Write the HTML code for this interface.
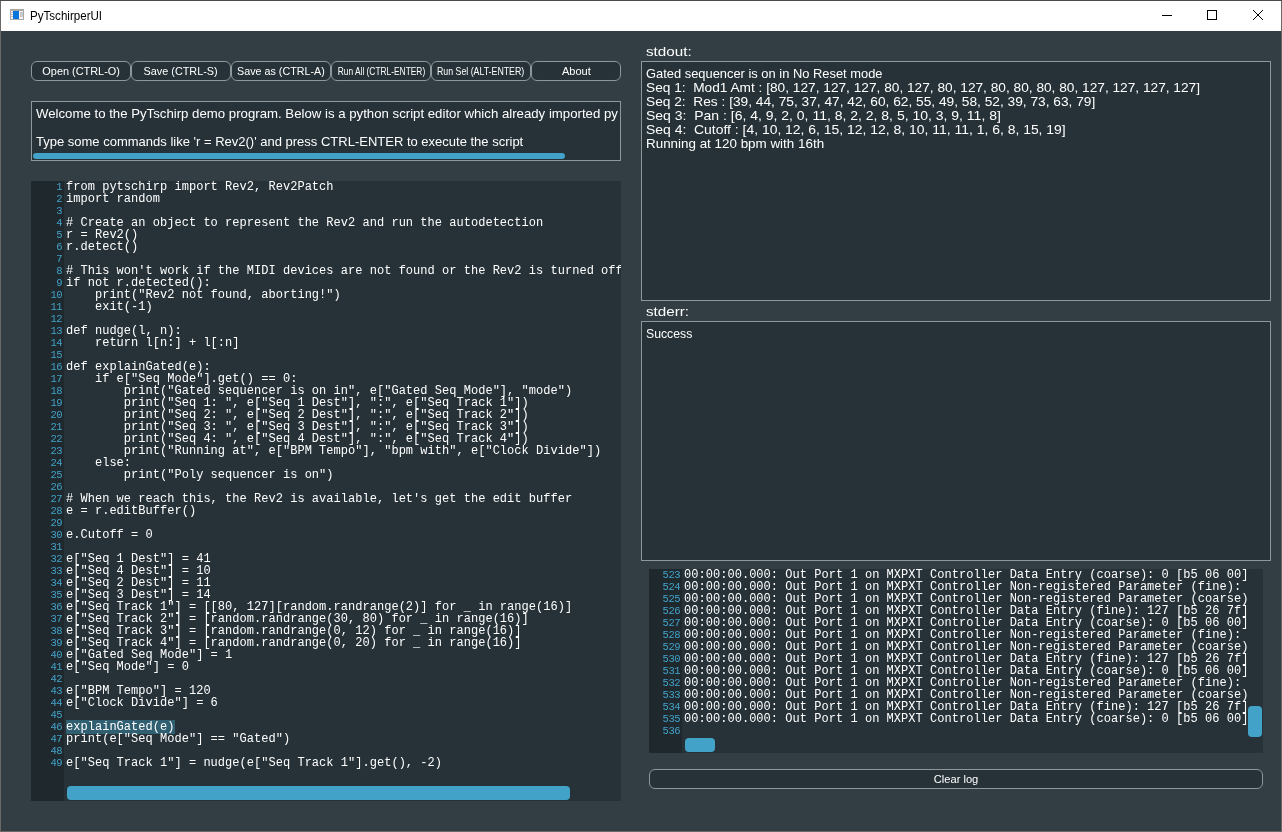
<!DOCTYPE html>
<html><head><meta charset="utf-8"><style>
*{box-sizing:border-box}
html,body{margin:0;padding:0;width:1282px;height:832px;overflow:hidden;background:#6a6764;font-family:"Liberation Sans",sans-serif}
.abs{position:absolute}
.btn,.box,.ed,.lbl,#title{will-change:transform}
#title{position:absolute;left:1px;top:1px;width:1280px;height:30px;background:#fff}
#title .t{position:absolute;left:29px;top:8px;font-size:12px;line-height:14px;color:#000;white-space:pre}
#main{position:absolute;left:1px;top:31px;width:1280px;height:800px;background:#323e44}
.btn{position:absolute;top:61px;height:20px;display:flex;justify-content:center;border:1px solid #8e989b;border-radius:6px;background:#263238;color:#ffffff;font-size:11px;line-height:18px;text-align:center;white-space:pre}
.box{position:absolute;border:1px solid #8e989b;background:#263238;overflow:hidden}
.sl{position:absolute;left:4px;font-size:13px;line-height:14px;color:#ffffff;white-space:pre}
.ed{position:absolute;background:#263238;overflow:hidden}
.gut{position:absolute;left:0;top:0;bottom:0;background:#1f282d}
.ln{position:absolute;right:2px;letter-spacing:-0.5px;height:12px;font-family:"Liberation Mono",monospace;font-size:10.5px;line-height:12px;color:#42a2c8;white-space:pre}
.cl{position:absolute;left:0;height:12px;font-family:"Liberation Mono",monospace;font-size:12px;line-height:12px;color:#ffffff;white-space:pre;letter-spacing:0.03px}
.lg .cl{letter-spacing:0.035px}
.bt{display:inline-block;transform-origin:50% 50%}
.ft{display:inline-block;transform-origin:0 50%}
.hl{background:#315f72;padding-right:1px}
.sb{position:absolute;background:#42a2c8;border-radius:4px}
.lbl{position:absolute;font-size:13px;line-height:14px;color:#ffffff;white-space:pre}
</style></head><body>
<div class="abs" style="left:0;top:0;width:1282px;height:1px;background:#4a4a4a"></div>
<div id="title">
 <svg class="abs" style="left:9px;top:8px" width="14" height="11" viewBox="0 0 14 11" shape-rendering="crispEdges">
  <rect x="0" y="0" width="14" height="11" fill="#a9a9a9"/>
  <rect x="1" y="2" width="12" height="8" fill="#f4f4f4"/>
  <rect x="1" y="3" width="2" height="1" fill="#c4c4c4"/><rect x="1" y="5" width="2" height="1" fill="#c4c4c4"/><rect x="1" y="7" width="2" height="1" fill="#c4c4c4"/>
  <rect x="3" y="2" width="6" height="8" fill="#0a74d8"/>
  <rect x="10" y="3" width="3" height="5" fill="#c9c9c9"/>
 </svg>
 <div class="t"><span style="display:inline-block;transform:scaleX(0.965);transform-origin:0 50%">PyTschirperUI</span></div>
 <svg class="abs" style="left:1159px;top:7px" width="14" height="14" shape-rendering="crispEdges"><rect x="2" y="7" width="10" height="1" fill="#000"/></svg>
 <svg class="abs" style="left:1204px;top:7px" width="14" height="14"><rect x="2.5" y="2.5" width="9" height="9" fill="none" stroke="#000" stroke-width="1"/></svg>
 <svg class="abs" style="left:1250px;top:7px" width="14" height="14"><path d="M2 2 L12 12 M12 2 L2 12" stroke="#000" stroke-width="1"/></svg>
</div>
<div id="main"></div>
<!-- buttons -->
<div class="btn" style="left:31px;width:100px"><span class="bt" id="f_b1" style="transform:scaleX(0.9908)">Open (CTRL-O)</span></div>
<div class="btn" style="left:131px;width:100px"><span class="bt" id="f_b2" style="transform:scaleX(0.9851)">Save (CTRL-S)</span></div>
<div class="btn" style="left:231px;width:100px"><span class="bt" id="f_b3" style="transform:scaleX(0.9750)">Save as (CTRL-A)</span></div>
<div class="btn" style="left:331px;width:100px"><span class="bt" id="f_b4" style="transform:scaleX(0.7609)">Run All (CTRL-ENTER)</span></div>
<div class="btn" style="left:431px;width:100px"><span class="bt" id="f_b5" style="transform:scaleX(0.7994)">Run Sel (ALT-ENTER)</span></div>
<div class="btn" style="left:531px;width:90px"><span class="bt" id="f_b6" style="transform:scaleX(1.0071)">About</span></div>
<!-- welcome -->
<div class="box" style="left:31px;top:101px;width:590px;height:60px">
 <div class="sl" style="top:5px"><span class="ft" id="f_w1" style="transform:scaleX(1.0160)">Welcome to the PyTschirp demo program. Below is a python script editor which already imported py</span></div>
 <div class="sl" style="top:33px">Type some commands like 'r = Rev2()' and press CTRL-ENTER to execute the script</div>
 <div class="sb" style="left:1px;top:51px;width:532px;height:6px;border-radius:3px"></div>
</div>
<!-- editor -->
<div class="ed" style="left:31px;top:181px;width:590px;height:620px">
 <div class="gut" style="width:33px"><div class="ln" style="top:0px">1</div><div class="ln" style="top:12px">2</div><div class="ln" style="top:24px">3</div><div class="ln" style="top:36px">4</div><div class="ln" style="top:48px">5</div><div class="ln" style="top:60px">6</div><div class="ln" style="top:72px">7</div><div class="ln" style="top:84px">8</div><div class="ln" style="top:96px">9</div><div class="ln" style="top:108px">10</div><div class="ln" style="top:120px">11</div><div class="ln" style="top:132px">12</div><div class="ln" style="top:144px">13</div><div class="ln" style="top:156px">14</div><div class="ln" style="top:168px">15</div><div class="ln" style="top:180px">16</div><div class="ln" style="top:192px">17</div><div class="ln" style="top:204px">18</div><div class="ln" style="top:216px">19</div><div class="ln" style="top:228px">20</div><div class="ln" style="top:240px">21</div><div class="ln" style="top:252px">22</div><div class="ln" style="top:264px">23</div><div class="ln" style="top:276px">24</div><div class="ln" style="top:288px">25</div><div class="ln" style="top:300px">26</div><div class="ln" style="top:312px">27</div><div class="ln" style="top:324px">28</div><div class="ln" style="top:336px">29</div><div class="ln" style="top:348px">30</div><div class="ln" style="top:360px">31</div><div class="ln" style="top:372px">32</div><div class="ln" style="top:384px">33</div><div class="ln" style="top:396px">34</div><div class="ln" style="top:408px">35</div><div class="ln" style="top:420px">36</div><div class="ln" style="top:432px">37</div><div class="ln" style="top:444px">38</div><div class="ln" style="top:456px">39</div><div class="ln" style="top:468px">40</div><div class="ln" style="top:480px">41</div><div class="ln" style="top:492px">42</div><div class="ln" style="top:504px">43</div><div class="ln" style="top:516px">44</div><div class="ln" style="top:528px">45</div><div class="ln" style="top:540px">46</div><div class="ln" style="top:552px">47</div><div class="ln" style="top:564px">48</div><div class="ln" style="top:576px">49</div></div>
 <div class="abs" style="left:35px;top:0;width:555px;height:620px"><div class="cl" style="top:0px">from pytschirp import Rev2, Rev2Patch</div><div class="cl" style="top:12px">import random</div><div class="cl" style="top:24px"></div><div class="cl" style="top:36px"># Create an object to represent the Rev2 and run the autodetection</div><div class="cl" style="top:48px">r = Rev2()</div><div class="cl" style="top:60px">r.detect()</div><div class="cl" style="top:72px"></div><div class="cl" style="top:84px"># This won't work if the MIDI devices are not found or the Rev2 is turned off</div><div class="cl" style="top:96px">if not r.detected():</div><div class="cl" style="top:108px">    print("Rev2 not found, aborting!")</div><div class="cl" style="top:120px">    exit(-1)</div><div class="cl" style="top:132px"></div><div class="cl" style="top:144px">def nudge(l, n):</div><div class="cl" style="top:156px">    return l[n:] + l[:n]</div><div class="cl" style="top:168px"></div><div class="cl" style="top:180px">def explainGated(e):</div><div class="cl" style="top:192px">    if e["Seq Mode"].get() == 0:</div><div class="cl" style="top:204px">        print("Gated sequencer is on in", e["Gated Seq Mode"], "mode")</div><div class="cl" style="top:216px">        print("Seq 1: ", e["Seq 1 Dest"], ":", e["Seq Track 1"])</div><div class="cl" style="top:228px">        print("Seq 2: ", e["Seq 2 Dest"], ":", e["Seq Track 2"])</div><div class="cl" style="top:240px">        print("Seq 3: ", e["Seq 3 Dest"], ":", e["Seq Track 3"])</div><div class="cl" style="top:252px">        print("Seq 4: ", e["Seq 4 Dest"], ":", e["Seq Track 4"])</div><div class="cl" style="top:264px">        print("Running at", e["BPM Tempo"], "bpm with", e["Clock Divide"])</div><div class="cl" style="top:276px">    else:</div><div class="cl" style="top:288px">        print("Poly sequencer is on")</div><div class="cl" style="top:300px"></div><div class="cl" style="top:312px"># When we reach this, the Rev2 is available, let's get the edit buffer</div><div class="cl" style="top:324px">e = r.editBuffer()</div><div class="cl" style="top:336px"></div><div class="cl" style="top:348px">e.Cutoff = 0</div><div class="cl" style="top:360px"></div><div class="cl" style="top:372px">e["Seq 1 Dest"] = 41</div><div class="cl" style="top:384px">e["Seq 4 Dest"] = 10</div><div class="cl" style="top:396px">e["Seq 2 Dest"] = 11</div><div class="cl" style="top:408px">e["Seq 3 Dest"] = 14</div><div class="cl" style="top:420px">e["Seq Track 1"] = [[80, 127][random.randrange(2)] for _ in range(16)]</div><div class="cl" style="top:432px">e["Seq Track 2"] = [random.randrange(30, 80) for _ in range(16)]</div><div class="cl" style="top:444px">e["Seq Track 3"] = [random.randrange(0, 12) for _ in range(16)]</div><div class="cl" style="top:456px">e["Seq Track 4"] = [random.randrange(0, 20) for _ in range(16)]</div><div class="cl" style="top:468px">e["Gated Seq Mode"] = 1</div><div class="cl" style="top:480px">e["Seq Mode"] = 0</div><div class="cl" style="top:492px"></div><div class="cl" style="top:504px">e["BPM Tempo"] = 120</div><div class="cl" style="top:516px">e["Clock Divide"] = 6</div><div class="cl" style="top:528px"></div><div class="cl" style="top:540px"><span class="hl">explainGated(e)</span></div><div class="cl" style="top:552px">print(e["Seq Mode"] == "Gated")</div><div class="cl" style="top:564px"></div><div class="cl" style="top:576px">e["Seq Track 1"] = nudge(e["Seq Track 1"].get(), -2)</div></div>
 <div class="sb" style="left:36px;top:605px;width:503px;height:14px"></div>
</div>
<!-- stdout -->
<div class="lbl" style="left:646px;top:45px"><span class="ft" id="f_l1" style="transform:scaleX(1.1703)">stdout:</span></div>
<div class="box" style="left:641px;top:61px;width:630px;height:240px">
 <div class="abs" style="left:0;top:5px;width:628px;height:200px"><div class="sl" style="top:0px"><span class="ft" id="f_so0" style="transform:scaleX(0.9916)">Gated sequencer is on in No Reset mode</span></div><div class="sl" style="top:14px"><span class="ft" id="f_so1" style="transform:scaleX(1.0529)">Seq 1:  Mod1 Amt : [80, 127, 127, 127, 80, 127, 80, 127, 80, 80, 80, 80, 127, 127, 127, 127]</span></div><div class="sl" style="top:28px"><span class="ft" id="f_so2" style="transform:scaleX(1.0554)">Seq 2:  Res : [39, 44, 75, 37, 47, 42, 60, 62, 55, 49, 58, 52, 39, 73, 63, 79]</span></div><div class="sl" style="top:42px"><span class="ft" id="f_so3" style="transform:scaleX(1.0759)">Seq 3:  Pan : [6, 4, 9, 2, 0, 11, 8, 2, 2, 8, 5, 10, 3, 9, 11, 8]</span></div><div class="sl" style="top:56px"><span class="ft" id="f_so4" style="transform:scaleX(1.0715)">Seq 4:  Cutoff : [4, 10, 12, 6, 15, 12, 12, 8, 10, 11, 11, 1, 6, 8, 15, 19]</span></div><div class="sl" style="top:70px"><span class="ft" id="f_so5" style="transform:scaleX(1.0310)">Running at 120 bpm with 16th</span></div></div>
</div>
<div class="lbl" style="left:646px;top:305px"><span class="ft" id="f_l2" style="transform:scaleX(1.1686)">stderr:</span></div>
<div class="box" style="left:641px;top:321px;width:630px;height:240px">
 <div class="sl" style="top:5px"><span class="ft" id="f_succ" style="transform:scaleX(0.9417)">Success</span></div>
</div>
<!-- log -->
<div class="ed" style="left:649px;top:569px;width:614px;height:184px">
 <div class="gut" style="width:33px"><div class="ln" style="top:0px">523</div><div class="ln" style="top:12px">524</div><div class="ln" style="top:24px">525</div><div class="ln" style="top:36px">526</div><div class="ln" style="top:48px">527</div><div class="ln" style="top:60px">528</div><div class="ln" style="top:72px">529</div><div class="ln" style="top:84px">530</div><div class="ln" style="top:96px">531</div><div class="ln" style="top:108px">532</div><div class="ln" style="top:120px">533</div><div class="ln" style="top:132px">534</div><div class="ln" style="top:144px">535</div><div class="ln" style="top:156px">536</div></div>
 <div class="abs lg" style="left:35px;top:0;width:563px;height:184px;overflow:hidden"><div class="cl" style="top:0px">00:00:00.000: Out Port 1 on MXPXT Controller Data Entry (coarse): 0 [b5 06 00]</div><div class="cl" style="top:12px">00:00:00.000: Out Port 1 on MXPXT Controller Non-registered Parameter (fine): </div><div class="cl" style="top:24px">00:00:00.000: Out Port 1 on MXPXT Controller Non-registered Parameter (coarse): 0</div><div class="cl" style="top:36px">00:00:00.000: Out Port 1 on MXPXT Controller Data Entry (fine): 127 [b5 26 7f]</div><div class="cl" style="top:48px">00:00:00.000: Out Port 1 on MXPXT Controller Data Entry (coarse): 0 [b5 06 00]</div><div class="cl" style="top:60px">00:00:00.000: Out Port 1 on MXPXT Controller Non-registered Parameter (fine): </div><div class="cl" style="top:72px">00:00:00.000: Out Port 1 on MXPXT Controller Non-registered Parameter (coarse): 0</div><div class="cl" style="top:84px">00:00:00.000: Out Port 1 on MXPXT Controller Data Entry (fine): 127 [b5 26 7f]</div><div class="cl" style="top:96px">00:00:00.000: Out Port 1 on MXPXT Controller Data Entry (coarse): 0 [b5 06 00]</div><div class="cl" style="top:108px">00:00:00.000: Out Port 1 on MXPXT Controller Non-registered Parameter (fine): </div><div class="cl" style="top:120px">00:00:00.000: Out Port 1 on MXPXT Controller Non-registered Parameter (coarse): 0</div><div class="cl" style="top:132px">00:00:00.000: Out Port 1 on MXPXT Controller Data Entry (fine): 127 [b5 26 7f]</div><div class="cl" style="top:144px">00:00:00.000: Out Port 1 on MXPXT Controller Data Entry (coarse): 0 [b5 06 00]</div><div class="cl" style="top:156px"></div></div>
 <div class="sb" style="left:599px;top:137px;width:14px;height:31px"></div>
 <div class="sb" style="left:36px;top:169px;width:30px;height:14px"></div>
</div>
<div class="btn" style="left:649px;top:769px;width:614px;height:20px;border-radius:6px"><span class="bt" id="f_b7" style="transform:scaleX(1.0119)">Clear log</span></div>
</body></html>
